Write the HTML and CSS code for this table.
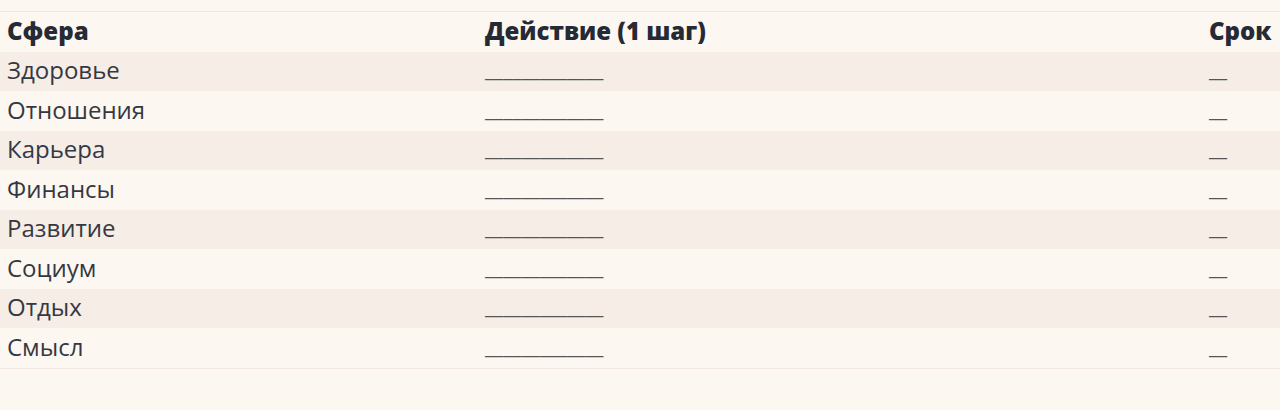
FILE: index.html
```html
<!DOCTYPE html>
<html lang="ru">
<head>
<meta charset="utf-8">
<link rel="stylesheet" href="styles.css">
</head>
<body>
<div class="wrap">
<table class="plan">
<thead>
<tr><th class="c1">Сфера</th><th class="c2">Действие (1 шаг)</th><th class="c3">Срок</th></tr>
</thead>
<tbody>
<tr><td>Здоровье</td><td><span class="blank">_____________</span></td><td><span class="blank">__</span></td></tr>
<tr><td>Отношения</td><td><span class="blank">_____________</span></td><td><span class="blank">__</span></td></tr>
<tr><td>Карьера</td><td><span class="blank">_____________</span></td><td><span class="blank">__</span></td></tr>
<tr><td>Финансы</td><td><span class="blank">_____________</span></td><td><span class="blank">__</span></td></tr>
<tr><td>Развитие</td><td><span class="blank">_____________</span></td><td><span class="blank">__</span></td></tr>
<tr><td>Социум</td><td><span class="blank">_____________</span></td><td><span class="blank">__</span></td></tr>
<tr><td>Отдых</td><td><span class="blank">_____________</span></td><td><span class="blank">__</span></td></tr>
<tr><td>Смысл</td><td><span class="blank">_____________</span></td><td><span class="blank">__</span></td></tr>
</tbody>
</table>
</div>
</body>
</html>
```
FILE: styles.css
```css
html, body {
  margin: 0;
  padding: 0;
  background: #fdf7f1;
}
.wrap {
  padding-top: 11px;
}
.plan {
  width: 1280px;
  border-collapse: collapse;
  table-layout: fixed;
  font-family: "Open Sans", sans-serif;
  font-size: 24px;
  color: #353842;
  border-top: 1px solid #f2e8df;
  border-bottom: 1px solid #f2e8df;
}
.plan th, .plan td {
  text-align: left;
  padding: 3.75px 7px 6.25px;
  line-height: 29.5px;
  height: 29.5px;
  white-space: nowrap;
}
.plan th {
  font-weight: 800;
  color: #262a35;
}
.c1 { width: 464px; }
.c2 { width: 710px; }
.c3 { width: 64px; }
.plan tbody tr:nth-child(odd) {
  background: #f5ede6;
}
.blank {
  font-size: 20.8px;
  line-height: 10px;
  vertical-align: 2px;
  color: #555;
}
```
